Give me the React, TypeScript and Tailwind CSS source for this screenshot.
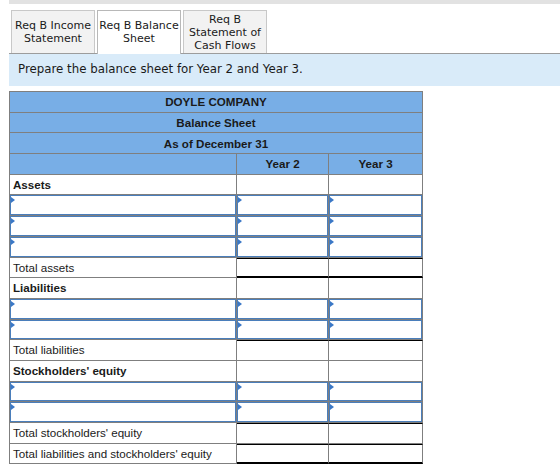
import React from "react";

// ─── Data ──────────────────────────────────────────────────────────────────────

type Row =
  | { kind: "heading"; text: string }
  | { kind: "input" }
  | { kind: "total"; text: string; double?: boolean };

const rows: Row[] = [
  { kind: "heading", text: "Assets" },
  { kind: "input" },
  { kind: "input" },
  { kind: "input" },
  { kind: "total", text: "Total assets", double: true },
  { kind: "heading", text: "Liabilities" },
  { kind: "input" },
  { kind: "input" },
  { kind: "total", text: "Total liabilities" },
  { kind: "heading", text: "Stockholders' equity" },
  { kind: "input" },
  { kind: "input" },
  { kind: "total", text: "Total stockholders' equity" },
  { kind: "total", text: "Total liabilities and stockholders' equity", double: true },
];

const tabs = [
  { lines: ["Req B Income", "Statement"], active: false },
  { lines: ["Req B Balance", "Sheet"], active: true },
  { lines: ["Req B", "Statement of", "Cash Flows"], active: false },
];

// ─── Pieces ────────────────────────────────────────────────────────────────────

function InputBox() {
  return (
    <div className="relative h-full w-full border border-[#4a7ebb] bg-white">
      <span className="absolute left-0 top-[1px] h-0 w-0 border-y-[3px] border-l-[4px] border-y-transparent border-l-[#3b78c6]" />
    </div>
  );
}

const cell = "border-r border-b border-[#7f7f7f] h-full";
const c1 = "w-[227px]";
const c2 = "w-[92px]";
const c3 = "w-[94px]";

function HeaderRow({ text }: { text: string }) {
  return (
    <div className="flex h-[20.7px] bg-[#78aee6]">
      <div className={`${cell} flex-1 flex items-center justify-center font-bold`}>{text}</div>
    </div>
  );
}

export default function App() {
  return (
    <div className="w-[560px] h-[464px] overflow-hidden bg-white pl-[9px] text-[#1a1a1a]">
      {/* top strip */}
      <div className="h-[4px] bg-[#e2e2e2]" />

      {/* tabs */}
      <div className="mt-[6px] flex items-end gap-[2px] border-b border-[#9c9c9c] pl-[2px] font-['DejaVu_Sans',Verdana,sans-serif] text-[11px] leading-[13px]">
        {tabs.map((t, i) => (
          <div
            key={i}
            className={
              t.active
                ? "-mb-px flex h-[44px] w-[84px] flex-col items-center justify-center border border-b-0 border-[#b8b8b8] bg-white pb-px"
                : "flex h-[43px] w-[84px] flex-col items-center justify-center border border-b-0 border-[#c8c8c8] bg-[#f2f2f2]"
            }
          >
            {t.lines.map((l) => (
              <span key={l} className="whitespace-nowrap">{l}</span>
            ))}
          </div>
        ))}
      </div>

      {/* instruction */}
      <div className="flex h-[32px] items-center bg-[#d9ebf9] pl-[9px] font-['DejaVu_Sans',Verdana,sans-serif] text-[11.8px]">
        Prepare the balance sheet for Year 2 and Year 3.
      </div>

      {/* balance sheet */}
      <div className="mt-[5px] w-[414px] border-l border-t border-[#7f7f7f] font-['Liberation_Sans',Arial,sans-serif] text-[11.6px]">
        <HeaderRow text="DOYLE COMPANY" />
        <HeaderRow text="Balance Sheet" />
        <HeaderRow text="As of December 31" />
        <div className="flex h-[20.7px] bg-[#78aee6] font-bold">
          <div className={`${cell} ${c1}`} />
          <div className={`${cell} ${c2} flex items-center justify-center`}>Year 2</div>
          <div className={`${cell} ${c3} flex items-center justify-center`}>Year 3</div>
        </div>

        {rows.map((r, i) => {
          if (r.kind === "input") {
            return (
              <div key={i} className="flex h-[20.7px]">
                <div className={`${cell} ${c1}`}><InputBox /></div>
                <div className={`${cell} ${c2}`}><InputBox /></div>
                <div className={`${cell} ${c3}`}><InputBox /></div>
              </div>
            );
          }
          if (r.kind === "heading") {
            return (
              <div key={i} className="flex h-[20.7px]">
                <div className={`${cell} ${c1} flex items-center pl-[3px] font-bold`}>{r.text}</div>
                <div className={`${cell} ${c2}`} />
                <div className={`${cell} ${c3}`} />
              </div>
            );
          }
          const yr = r.double
            ? "border-t border-t-black border-b-2 border-b-black"
            : "border-t border-t-black";
          return (
            <div key={i} className="flex h-[20.7px]">
              <div className={`${cell} ${c1} flex items-center pl-[3px] whitespace-nowrap`}>{r.text}</div>
              <div className={`${cell} ${c2} ${yr}`} />
              <div className={`${cell} ${c3} ${yr}`} />
            </div>
          );
        })}
      </div>
    </div>
  );
}
